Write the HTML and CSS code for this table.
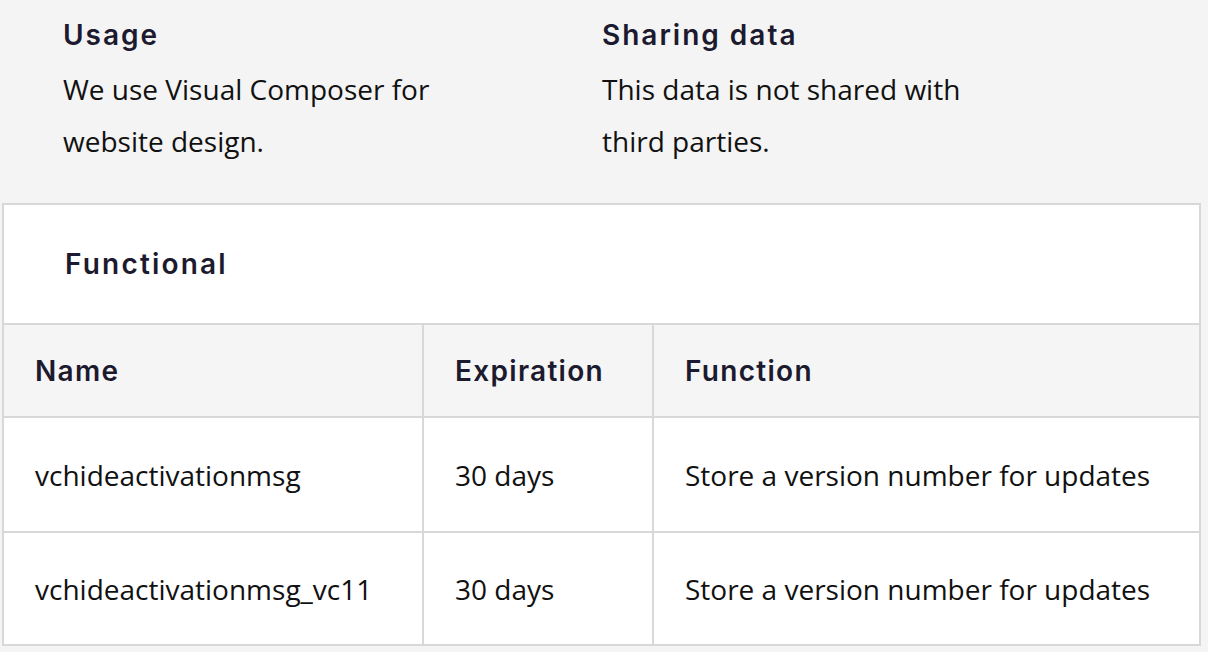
FILE: index.html
```html
<!DOCTYPE html>
<html lang="en">
<head>
<meta charset="utf-8">
<title>Cookie details</title>
<link rel="stylesheet" href="styles.css">
</head>
<body>
<section class="info">
  <div class="info-col">
    <h3 class="info-title">Usage</h3>
    <p class="info-text">We use Visual Composer for website design.</p>
  </div>
  <div class="info-col">
    <h3 class="info-title">Sharing data</h3>
    <p class="info-text">This data is not shared with third parties.</p>
  </div>
</section>
<section class="cookie-box">
  <h3 class="box-title">Functional</h3>
  <div class="row head">
    <div class="cell">Name</div>
    <div class="cell">Expiration</div>
    <div class="cell">Function</div>
  </div>
  <div class="row body-row">
    <div class="cell">vchideactivationmsg</div>
    <div class="cell">30 days</div>
    <div class="cell">Store a version number for updates</div>
  </div>
  <div class="row body-row last">
    <div class="cell">vchideactivationmsg_vc11</div>
    <div class="cell">30 days</div>
    <div class="cell">Store a version number for updates</div>
  </div>
</section>
</body>
</html>
```

FILE: styles.css
```css
html, body {
  margin: 0;
  padding: 0;
}
body {
  background: #f4f4f4;
  width: 1208px;
  height: 652px;
  overflow: hidden;
  font-family: "Open Sans", "Noto Sans", sans-serif;
  color: #111;
}
.info {
  display: grid;
  grid-template-columns: 539px 1fr;
  padding: 15px 0 36px 63px;
}
.info-title {
  margin: 0;
  font-family: Inter, "Noto Sans", sans-serif;
  font-weight: 600;
  font-size: 28px;
  letter-spacing: 2px;
  line-height: 40px;
  color: #1c1a2e;
}
.info-text {
  margin: 8px 0 0;
  font-size: 28px;
  line-height: 52px;
  width: 400px;
}
.cookie-box {
  margin: 0 7px 0 2px;
  border: 2px solid #d8d8d8;
  background: #fff;
}
.box-title {
  margin: 0;
  height: 118px;
  display: flex;
  align-items: center;
  padding-left: 61px;
  font-family: Inter, "Noto Sans", sans-serif;
  font-weight: 600;
  font-size: 28px;
  letter-spacing: 2.2px;
  color: #1c1a2e;
}
.row {
  display: grid;
  grid-template-columns: 418px 230px 1fr;
  border-top: 2px solid #d8d8d8;
}
.cell {
  display: flex;
  align-items: center;
  padding: 0 30px 0 31px;
}
.cell + .cell {
  border-left: 2px solid #d8d8d8;
}
.head {
  background: #f5f5f5;
  height: 91px;
}
.head .cell {
  font-family: Inter, "Noto Sans", sans-serif;
  font-weight: 600;
  font-size: 28px;
  letter-spacing: 1.3px;
  color: #1c1a2e;
}
.body-row {
  height: 113px;
  font-size: 28px;
}
.body-row.last {
  height: 111px;
}
```
